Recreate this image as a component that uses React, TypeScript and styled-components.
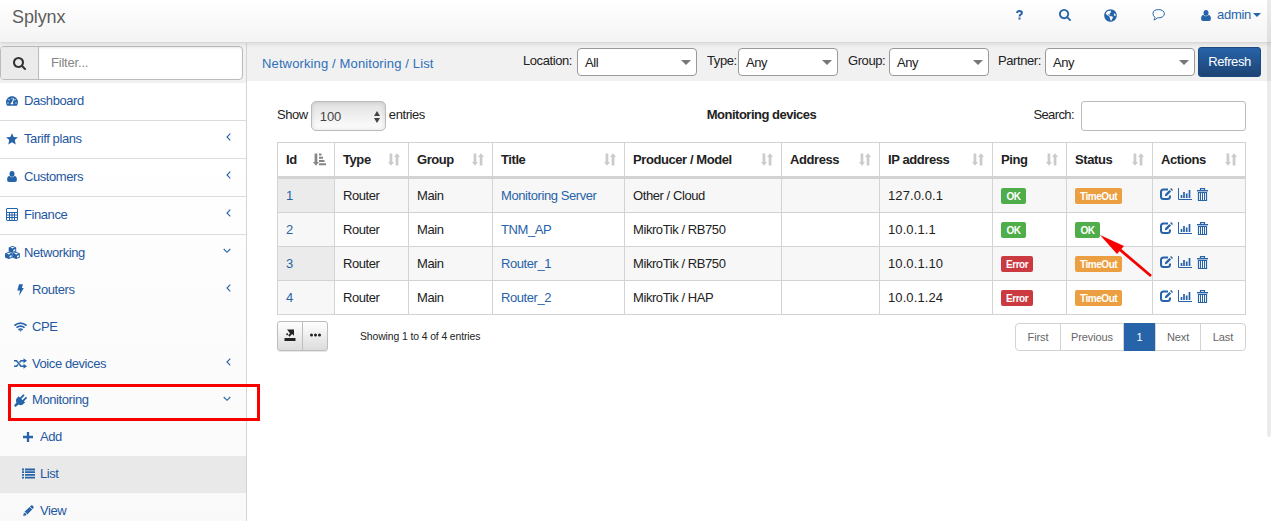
import React from "react";
import styled, { createGlobalStyle, css } from "styled-components";
import { FaTachometerAlt, FaGlobeAmericas } from "react-icons/fa";

const Global = createGlobalStyle`
  * { box-sizing: border-box; }
  body { margin: 0; overflow: hidden; background: #fff; color: #222;
    font: 13px/18px "Liberation Sans", Arial, sans-serif; letter-spacing: -.42px; }
  button, input { font: inherit; letter-spacing: inherit; }
`;

const Page = styled.div`height: 521px; display: flex; flex-direction: column; position: relative; overflow: hidden;`;
const TopBar = styled.header`
  height: 43px; flex: none; display: flex; align-items: flex-start; justify-content: space-between;
  padding: 0 10px 0 12px; background: linear-gradient(#fff, #f4f4f4);
  border-bottom: 1px solid #d9d9d9; box-shadow: 0 1px 5px rgba(0,0,0,.1); position: relative; z-index: 1;
`;
const Brand = styled.div`font-size: 18px; line-height: 34px; color: #5e5e5e; letter-spacing: -.1px;`;
const TopLinks = styled.nav`display: flex; align-items: center; height: 30px; color: #2763a9; letter-spacing: -.3px;`;
const TopLink = styled.a<{ $gap: number }>`
  display: flex; align-items: center; margin-right: ${p => p.$gap}px; svg { display: block; }
`;
const UserName = styled.span`margin: 0 2px 0 6px;`;
const Caret = styled.span<{ $size?: number; $color?: string }>`
  width: 0; height: 0; flex: none; border: ${p => p.$size ?? 4}px solid transparent;
  border-top-color: ${p => p.$color ?? "#2763a9"}; border-bottom: 0;
`;
const Body = styled.div`display: flex; flex: 1; min-height: 0;`;
const Sidebar = styled.aside`
  width: 247px; flex: none; border-right: 1px solid #d4d4d4; overflow: hidden;
  background: linear-gradient(#fff 20%, #f9f9f9);
`;
const FilterBox = styled.div`height: 40px; background: #f1f1f1; padding-top: 3px;`;
const FilterGroup = styled.div`
  width: 243px; height: 34px; display: flex; border: 1px solid #bbb; border-radius: 4px; overflow: hidden; background: #fff;
`;
const FilterIcon = styled.span`
  width: 38px; display: flex; align-items: center; justify-content: center; background: #ebebeb;
  border-right: 1px solid #bbb; color: #333;
`;
const FilterInput = styled.input`
  border: 0; outline: 0; padding: 0 12px; flex: 1; min-width: 0; color: #333; background: transparent; letter-spacing: -.2px;
  box-shadow: inset 0 1px 2px rgba(0,0,0,.08);
  &::placeholder { color: #858585; opacity: 1; }
`;
const MenuItem = styled.a<{ $level: number; $active?: boolean; $line?: boolean; $h?: number }>`
  display: flex; align-items: center; height: ${p => p.$h ?? 37}px; color: #1f58a0;
  padding: 0 15px 2px ${p => [4, 12, 20][p.$level]}px;
  background: ${p => (p.$active ? "#e9e9e9" : "transparent")};
  ${p => p.$line && css`border-bottom: 1px solid #dcdcdc;`}
`;
const MenuIcon = styled.span`
  width: 16px; display: flex; justify-content: center; margin-right: 4px; color: #2763a9; svg { display: block; flex: none; }
`;
const MenuText = styled.span`flex: 1;`;
const ArrowSlot = styled.span`display: flex; margin-top: -3px; color: #2763a9;`;

const Main = styled.main`flex: 1; min-width: 0;`;
const FilterBar = styled.div`
  height: 38px; background: #f1f1f1; display: flex; justify-content: space-between; padding: 4px 10px 0 15px;
`;
const Crumb = styled.div`color: #2f6fb9; line-height: 33px; letter-spacing: .13px; a { color: inherit; }`;
const Filters = styled.div`display: flex; align-items: flex-start;`;
const FilterLabel = styled.label<{ $w: number; $gap: number }>`
  line-height: 28px; width: ${p => p.$w}px; margin-left: ${p => p.$gap}px; white-space: nowrap;
`;
const Select = styled.div<{ $w: number }>`
  width: ${p => p.$w}px; height: 28px; margin-top: 1px; border: 1px solid #999; border-radius: 4px; background: #fff;
  display: flex; align-items: center; justify-content: space-between; padding: 1px 5px 0 7px;
`;
const Refresh = styled.button`
  width: 63px; height: 30px; margin-left: 3px; padding: 0; color: #fff; border: 1px solid #1c4a80;
  border-radius: 3px; background: linear-gradient(#2763a9, #1d4474);
`;
const Content = styled.section`padding: 20px 25px 0 30px;`;
const Tools = styled.div`display: grid; grid-template-columns: 1fr auto 1fr; align-items: start; height: 41px;`;
const Length = styled.div`display: flex; line-height: 28px; gap: 3px;`;
const LengthSelect = styled.div`
  width: 75px; height: 30px; border: 1px solid #bbb; border-radius: 5px; padding: 1px 5px 0 8px;
  display: flex; align-items: center; justify-content: space-between; color: #444; letter-spacing: -.1px;
  background: linear-gradient(#e0e0e0, #fff); box-shadow: inset 0 0 5px rgba(0,0,0,.12);
`;
const Title = styled.strong`line-height: 28px; letter-spacing: -.5px;`;
const SearchBox = styled.label`display: flex; justify-content: flex-end; gap: 7px; line-height: 28px; letter-spacing: -.6px;`;
const SearchInput = styled.input`width: 165px; height: 30px; border: 1px solid #bbb; border-radius: 3px;`;
const Table = styled.table`
  width: 969px; table-layout: fixed; border-collapse: collapse;
  td, th { border: 1px solid #d3d3d3; padding: 0 8px; text-align: left; }
  th { height: 35px; border-bottom: 3px solid #d3d3d3; }
  td { height: 34px; }
  tbody tr:first-child td { height: 35px; }
`;
const HeadCell = styled.div`display: flex; align-items: center; justify-content: space-between; svg { display: block; }`;
const Row = styled.tr<{ $odd: boolean }>`
  background: ${p => (p.$odd ? "#f7f7f7" : "#fff")};
  td:first-child { background: ${p => (p.$odd ? "#ebebeb" : "#f7f7f7")}; }
`;
const Address = styled.span`letter-spacing: .1px;`;
const Link = styled.a`color: #2763a9;`;
const colors = { OK: "#4fad4a", Error: "#cb3a40", TimeOut: "#ec9f40" };
type State = keyof typeof colors;
const Badge = styled.span<{ $state: State }>`
  display: block; width: fit-content; min-width: 25px; height: 16px; line-height: 17px; padding: 0 5px; border-radius: 2px; margin-top: 1px;
  text-align: center; color: #fff; font-weight: bold; font-size: 10px; letter-spacing: -.45px; background: ${p => colors[p.$state]};
`;
const Actions = styled.div`display: flex; align-items: center; gap: 5px; color: #2763a9; margin: -3px 0 0 -1px; svg { display: block; }`;
const Footer = styled.div`display: flex; padding-top: 6px; align-items: flex-start;`;
const ButtonGroup = styled.div`
  display: flex; width: 51px; height: 30px; border: 1px solid #bdbdbd; border-radius: 3px;
  background: linear-gradient(#fff, #dcdcdc); box-shadow: 0 1px 1px rgba(0,0,0,.1);
`;
const ToolButton = styled.button`
  flex: 1; border: 0; padding: 0 0 2px; background: transparent; display: flex; align-items: center; justify-content: center; color: #222;
  & + & { border-left: 1px solid #bdbdbd; }
`;
const Info = styled.div`font-size: 10.4px; line-height: 32px; letter-spacing: -.1px; margin-left: 32px; flex: 1;`;
const Pager = styled.div`
  display: flex; height: 28px; margin-top: 2px; border: 1px solid #d3d3d3; border-radius: 4px; letter-spacing: -.1px;
`;
const PageLink = styled.a<{ $w: number; $active?: boolean }>`
  width: ${p => p.$w}px; text-align: center; font-size: 11px; line-height: 27px; color: #666;
  & + & { border-left: 1px solid #d3d3d3; }
  ${p => p.$active && css`&& { background: #2763a9; color: #fff; border-color: #2763a9; margin: -1px 0; line-height: 29px; }`}
`;
const ScrollTrack = styled.div`position: absolute; z-index: 2; right: 0; top: 0; width: 4px; height: 437px; background: rgba(0,0,0,.08); border-radius: 0 0 2px 2px;`;
const Highlight = styled.div`position: absolute; z-index: 3; left: 8px; top: 384px; width: 252px; height: 37px; border: 3px solid #f60000;`;
const Pointer = styled.svg`position: absolute; z-index: 3; left: 1098px; top: 233px;`;

const Search = ({ size = 12 }) => (
  <svg width={size} height={size} viewBox="0 0 1664 1664" fill="currentColor"><path d="M1152 704q0-185-131.5-316.5t-316.5-131.5-316.5 131.5-131.5 316.5 131.5 316.5 316.5 131.5 316.5-131.5 131.5-316.5zm512 832q0 52-38 90t-90 38q-54 0-90-38l-343-342q-179 124-399 124-143 0-273.5-55.5t-225-150-150-225-55.5-273.5 55.5-273.5 150-225 225-150 273.5-55.5 273.5 55.5 225 150 150 225 55.5 273.5q0 220-124 399l343 343q37 37 37 90z" /></svg>
);
const User = () => (
  <svg width="10" height="11" viewBox="0 0 10 11" fill="currentColor"><ellipse cx="5" cy="2.900" rx="2.500" ry="2.900" /><path d="M2.400 5Q.1 5.200.1 8.900.1 10.900 2 10.900h6q1.900 0 1.900-2Q9.900 5.200 7.600 5 6.600 6.300 5 6.300T2.400 5z" /></svg>
);
const Star = () => (
  <svg width="12" height="12" viewBox="0 0 12 12" fill="currentColor"><path d="M6 .2l1.700 3.700 4.200.4-3.100 2.800.9 4.300L6 9.200l-3.700 2.200.9-4.300L.1 4.300l4.200-.4z" /></svg>
);
const Calculator = () => (
  <svg width="12" height="13" viewBox="0 0 12 13" fill="none" stroke="currentColor"><rect x=".5" y=".5" width="11" height="12" rx=".5" /><path d="M1 4.500h10M1 7h10M1 9.500h10M3.500 4v8M6 4v8M8.500 4v8" /></svg>
);
const Cubes = () => (
  <svg width="15" height="13" viewBox="0 0 15 13" fill="currentColor">
    {[[3.7, 0], [0, 6], [7.4, 6]].map(([x, y]) => (
      <g key={x} transform={`translate(${x} ${y})`}>
        <path d="M3.800-.2L7.500 1.500V5.400L3.800 7.100 0 5.400V1.500z" />
        <path d="M3.800.8l2 .8-2 .8-2-.8zM4.600 3.900l1.900-.9v1.800l-1.900.9z" fill="#fbfbfb" />
      </g>
    ))}
  </svg>
);
const Bolt = () => (
  <svg width="7" height="12" viewBox="0 0 7 12" fill="currentColor"><path d="M2 .3h4L4.800 3.900h2L2.100 11.800l.9-5.200H.3z" /></svg>
);
const Wifi = () => (
  <svg width="13" height="10" viewBox="0 0 13 10" fill="none" stroke="currentColor" strokeWidth="1.700"><path d="M.4 3.600Q6.500-1.400 12.600 3.600M2.400 5.700q4.100-3.200 8.200 0M4.400 7.700q2.100-1.400 4.200 0" /><path d="M5.100 8.200h2.800L6.500 9.800z" fill="currentColor" stroke="none" /></svg>
);
const Random = () => (
  <svg width="13" height="11" viewBox="0 0 13 11" fill="none" stroke="currentColor" strokeWidth="1.500"><path d="M0 2.700h2.500L7 8.300h3M0 8.300h2.500l1.500-1.800M5.500 4.500L7 2.700h3" /><path d="M9.500.2L13 2.700 9.500 5.200zM9.500 5.800L13 8.300l-3.500 2.500z" fill="currentColor" stroke="none" /></svg>
);
const Plug = () => (
  <svg width="13" height="13" viewBox="0 0 13 13" fill="currentColor"><path d="M4.500 2.200l6.600 6.400-1.200.8Q7.800 12.200 4.600 10.600L1.500 13 0 11.600l2.500-3Q1 5.500 3.600 3.400z" /><path d="M6.300 4.600L9.400 1.300M8.800 7.100L12 3.900" stroke="currentColor" strokeWidth="1.800" strokeLinecap="round" /></svg>
);
const Comment = () => (
  <svg width="13" height="12" viewBox="0 0 13 12" fill="none" stroke="currentColor"><path d="M6.700.6c3.200 0 5.700 1.800 5.700 4.100S9.900 8.900 6.700 8.900q-.7 0-1.300-.1Q4 10.500 1.900 11q1-1.200 1-2.800Q1 6.900 1 4.700 1 .6 6.700.6z" /></svg>
);
const Question = () => (
  <svg width="7" height="10" viewBox="0 0 7 10" fill="none" stroke="currentColor" strokeWidth="2"><path d="M1 3Q1.200 1 3.500 1T5.900 2.900Q5.900 4 4.600 4.600 3.500 5.200 3.500 6.500M3.500 7.600v2" /></svg>
);
const Plus = () => <svg width="10" height="10" viewBox="0 0 10 10"><path d="M5 0v10M0 5h10" stroke="currentColor" strokeWidth="2.300" /></svg>;
const List = () => <svg width="13" height="11" viewBox="0 0 13 11"><path d="M0 1.500h2M3 1.500h10M0 4.200h2M3 4.200h10M0 6.900h2M3 6.900h10M0 9.600h2M3 9.600h10" stroke="currentColor" strokeWidth="1.800" /></svg>;
const Pencil = () => <svg width="11" height="11" viewBox="0 0 11 11" fill="currentColor"><path d="M8 .5q.8-.6 1.500.1l.9.9q.7.800 0 1.500l-.9.900L7 1.500zM6.500 2l2.700 2.600L4 9.800 3.500 8.300 2.700 7.600 1.300 7.100zM.9 7.700l1.900.7.600 1.800-3.200.7z" /></svg>;
const Angle = ({ down }: { down?: boolean }) => down
  ? <svg width="8" height="6" viewBox="0 0 8 6" fill="none" stroke="currentColor" strokeWidth="1.100"><path d="M.7 1l3.300 3.300L7.300 1" /></svg>
  : <svg width="5" height="8" viewBox="0 0 5 8" fill="none" stroke="currentColor" strokeWidth="1.100"><path d="M4.300.7L1 4l3.300 3.300" /></svg>;
const Sort = () => (
  <svg width="12" height="13" viewBox="0 0 12 13" fill="#cbcbcb"><path d="M1.600.5h2.700V9H6L3 12.700 0 9h1.600zM7.700 12.500h2.700V4H12L9 .3 6 4h1.700z" /></svg>
);
const SortAsc = () => (
  <svg width="13" height="13" viewBox="0 0 13 13" fill="#858585"><path d="M1.600.5h2.700V9H6L3 12.700 0 9h1.600zM6 .5h2.500v2H6zM6 3.700h4v2H6zM6 7h5.500v2H6zM6 10.300h7v2H6z" /></svg>
);
const Edit = () => (
  <svg width="13" height="12" viewBox="0 0 13 12" fill="none" stroke="currentColor"><path d="M8 1.500H3.500Q1 1.500 1 4v4.500Q1 11 3.500 11h4Q10 11 10 8.500V7.500" strokeWidth="2" /><path d="M4.800 8.300l.5-2.200L9.500 1.900l1.600 1.600L7 7.700z" fill="currentColor" stroke="none" /><path d="M10.600.5l1.900 1.900" strokeWidth="1.400" /></svg>
);
const Chart = () => <svg width="14" height="12" viewBox="0 0 14 12" stroke="currentColor" fill="none"><path d="M.5 0v11.500H14" /><path d="M3.500 10V7M6 10V4M8.700 10V5.500M11.500 10V2" strokeWidth="1.700" /></svg>;
const Trash = () => <svg width="11" height="13" viewBox="0 0 11 13" stroke="currentColor" fill="none"><path d="M0 2.700h11" strokeWidth="1.400" /><path d="M3.500 2V.7h4V2M1.500 4.500h8v8h-8z" strokeWidth="1.200" /><path d="M3.500 5v7M5.500 5v7M7.500 5v7" /></svg>;
const Export = () => <svg width="12" height="13" viewBox="0 0 12 13" fill="currentColor"><path d="M3 .5h7v6.300L8.100 5.100 5.500 7.700 4.200 6.300 6 4.300zM2 5l1.300-1 1 1.200L3 6.500zM.5 9h11v3H.5z" /></svg>;

interface Item { label: string; icon: React.ReactNode; level?: number; arrow?: "left" | "down"; line?: boolean; active?: boolean; h?: number }
const menu: Item[] = [
  { label: "Dashboard", icon: <FaTachometerAlt size={12} />, line: true, h: 38 },
  { label: "Tariff plans", icon: <Star />, arrow: "left", line: true, h: 38 },
  { label: "Customers", icon: <User />, arrow: "left", line: true, h: 38 },
  { label: "Finance", icon: <Calculator />, arrow: "left", line: true, h: 38 },
  { label: "Networking", icon: <Cubes />, arrow: "down" },
  { label: "Routers", icon: <Bolt />, arrow: "left", level: 1 },
  { label: "CPE", icon: <Wifi />, level: 1 },
  { label: "Voice devices", icon: <Random />, arrow: "left", level: 1 },
  { label: "Monitoring", icon: <Plug />, arrow: "down", level: 1, h: 36 },
  { label: "Add", icon: <Plus />, level: 2 },
  { label: "List", icon: <List />, level: 2, active: true },
  { label: "View", icon: <Pencil />, level: 2 },
];
const columns: [string, number][] = [["Id", 57], ["Type", 74], ["Group", 84], ["Title", 132], ["Producer / Model", 157], ["Address", 98], ["IP address", 113], ["Ping", 74], ["Status", 86], ["Actions", 93]];
const devices: { title: string; model: string; ip: string; ping: State; status: State }[] = [
  { title: "Monitoring Server", model: "Other / Cloud", ip: "127.0.0.1", ping: "OK", status: "TimeOut" },
  { title: "TNM_AP", model: "MikroTik / RB750", ip: "10.0.1.1", ping: "OK", status: "OK" },
  { title: "Router_1", model: "MikroTik / RB750", ip: "10.0.1.10", ping: "Error", status: "TimeOut" },
  { title: "Router_2", model: "MikroTik / HAP", ip: "10.0.1.24", ping: "Error", status: "TimeOut" },
];
const filters = [
  { label: "Location:", value: "All", w: 120, labelW: 54, gap: 0 },
  { label: "Type:", value: "Any", w: 100, labelW: 31, gap: 10 },
  { label: "Group:", value: "Any", w: 100, labelW: 41, gap: 10 },
  { label: "Partner:", value: "Any", w: 150, labelW: 47, gap: 9 },
];

export default function App() {
  return (
    <Page>
      <Global />
      <TopBar>
        <Brand>Splynx</Brand>
        <TopLinks>
          <TopLink $gap={36}><Question /></TopLink>
          <TopLink $gap={33}><Search size={12} /></TopLink>
          <TopLink $gap={35}><FaGlobeAmericas size={13} /></TopLink>
          <TopLink $gap={36}><Comment /></TopLink>
          <TopLink $gap={0}><User /><UserName>admin</UserName><Caret /></TopLink>
        </TopLinks>
      </TopBar>
      <Body>
        <Sidebar>
          <FilterBox>
            <FilterGroup><FilterIcon><Search size={13} /></FilterIcon><FilterInput placeholder="Filter..." /></FilterGroup>
          </FilterBox>
          {menu.map(m => (
            <MenuItem key={m.label} $level={m.level ?? 0} $line={m.line} $active={m.active} $h={m.h}>
              <MenuIcon>{m.icon}</MenuIcon><MenuText>{m.label}</MenuText>
              {m.arrow && <ArrowSlot><Angle down={m.arrow === "down"} /></ArrowSlot>}
            </MenuItem>
          ))}
        </Sidebar>
        <Main>
          <FilterBar>
            <Crumb><a>Networking</a> / <a>Monitoring</a> / <a>List</a></Crumb>
            <Filters>
              {filters.map(f => (
                <React.Fragment key={f.label}>
                  <FilterLabel $w={f.labelW} $gap={f.gap}>{f.label}</FilterLabel>
                  <Select $w={f.w}>{f.value}<Caret $size={5} $color="#777" /></Select>
                </React.Fragment>
              ))}
              <Refresh>Refresh</Refresh>
            </Filters>
          </FilterBar>
          <Content>
            <Tools>
              <Length>Show <LengthSelect>100
                <svg width="6" height="12" viewBox="0 0 6 12" fill="#444"><path d="M3 0l3 5H0zM3 12l3-5H0z" /></svg>
              </LengthSelect> entries</Length>
              <Title>Monitoring devices</Title>
              <SearchBox>Search:<SearchInput /></SearchBox>
            </Tools>
            <Table>
              <colgroup>{columns.map(([n, w]) => <col key={n} width={w} />)}</colgroup>
              <thead><tr>{columns.map(([n], i) => <th key={n}><HeadCell>{n}{i ? <Sort /> : <SortAsc />}</HeadCell></th>)}</tr></thead>
              <tbody>
                {devices.map((d, i) => (
                  <Row key={d.title} $odd={i % 2 === 0}>
                    <td><Link>{i + 1}</Link></td><td>Router</td><td>Main</td><td><Link>{d.title}</Link></td>
                    <td>{d.model}</td><td /><td><Address>{d.ip}</Address></td>
                    <td><Badge $state={d.ping}>{d.ping}</Badge></td><td><Badge $state={d.status}>{d.status}</Badge></td>
                    <td><Actions><Edit /><Chart /><Trash /></Actions></td>
                  </Row>
                ))}
              </tbody>
            </Table>
            <Footer>
              <ButtonGroup>
                <ToolButton><Export /></ToolButton>
                <ToolButton><svg width="11" height="4" viewBox="0 0 11 4" fill="currentColor"><circle cx="1.500" cy="2" r="1.500" /><circle cx="5.500" cy="2" r="1.500" /><circle cx="9.500" cy="2" r="1.500" /></svg></ToolButton>
              </ButtonGroup>
              <Info>Showing 1 to 4 of 4 entries</Info>
              <Pager>
                <PageLink $w={44}>First</PageLink><PageLink $w={63}>Previous</PageLink><PageLink $w={32} $active>1</PageLink>
                <PageLink $w={45}>Next</PageLink><PageLink $w={45}>Last</PageLink>
              </Pager>
            </Footer>
          </Content>
        </Main>
      </Body>
      <ScrollTrack />
      <Highlight />
      <Pointer width="56" height="46" viewBox="0 0 56 46"><path d="M20 15L53 43" stroke="#f60000" strokeWidth="2.800" /><path d="M2 2l24 11-7 8z" fill="#f60000" /></Pointer>
    </Page>
  );
}
